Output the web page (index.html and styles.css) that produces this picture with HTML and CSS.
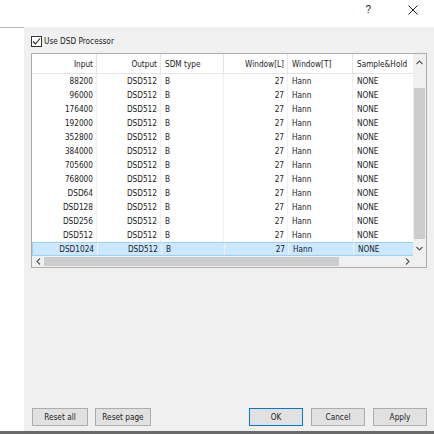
FILE: index.html
```html
<!DOCTYPE html>
<html>
<head>
<meta charset="utf-8">
<link rel="stylesheet" href="styles.css">
</head>
<body>
<div class="window">
  <div class="titlebar">
    <span class="tb-help">?</span>
    <span class="tb-close">
      <svg width="10" height="10" viewBox="0 0 10 10"><path d="M0.5 0.5 L9.5 9.5 M9.5 0.5 L0.5 9.5" stroke="#222" stroke-width="1" fill="none"/></svg>
    </span>
  </div>
  <div class="body">
    <div class="tree"></div>
    <div class="main">
      <label class="check-row">
        <span class="checkbox">
          <svg width="9" height="9" viewBox="0 0 9 9"><path d="M1 4.5 L3.5 7 L8 1.5" stroke="#222" stroke-width="1.1" fill="none"/></svg>
        </span>
        <span>Use DSD Processor</span>
      </label>
      <div class="listview">
        <div class="list">
          <div class="row header">
            <div class="c r">Input</div>
            <div class="c r">Output</div>
            <div class="c">SDM type</div>
            <div class="c r">Window[L]</div>
            <div class="c">Window[T]</div>
            <div class="c">Sample&amp;Hold</div>
          </div>
          <div class="row"><div class="c r">88200</div><div class="c r">DSD512</div><div class="c">B</div><div class="c r">27</div><div class="c">Hann</div><div class="c">NONE</div></div>
          <div class="row"><div class="c r">96000</div><div class="c r">DSD512</div><div class="c">B</div><div class="c r">27</div><div class="c">Hann</div><div class="c">NONE</div></div>
          <div class="row"><div class="c r">176400</div><div class="c r">DSD512</div><div class="c">B</div><div class="c r">27</div><div class="c">Hann</div><div class="c">NONE</div></div>
          <div class="row"><div class="c r">192000</div><div class="c r">DSD512</div><div class="c">B</div><div class="c r">27</div><div class="c">Hann</div><div class="c">NONE</div></div>
          <div class="row"><div class="c r">352800</div><div class="c r">DSD512</div><div class="c">B</div><div class="c r">27</div><div class="c">Hann</div><div class="c">NONE</div></div>
          <div class="row"><div class="c r">384000</div><div class="c r">DSD512</div><div class="c">B</div><div class="c r">27</div><div class="c">Hann</div><div class="c">NONE</div></div>
          <div class="row"><div class="c r">705600</div><div class="c r">DSD512</div><div class="c">B</div><div class="c r">27</div><div class="c">Hann</div><div class="c">NONE</div></div>
          <div class="row"><div class="c r">768000</div><div class="c r">DSD512</div><div class="c">B</div><div class="c r">27</div><div class="c">Hann</div><div class="c">NONE</div></div>
          <div class="row"><div class="c r">DSD64</div><div class="c r">DSD512</div><div class="c">B</div><div class="c r">27</div><div class="c">Hann</div><div class="c">NONE</div></div>
          <div class="row"><div class="c r">DSD128</div><div class="c r">DSD512</div><div class="c">B</div><div class="c r">27</div><div class="c">Hann</div><div class="c">NONE</div></div>
          <div class="row"><div class="c r">DSD256</div><div class="c r">DSD512</div><div class="c">B</div><div class="c r">27</div><div class="c">Hann</div><div class="c">NONE</div></div>
          <div class="row"><div class="c r">DSD512</div><div class="c r">DSD512</div><div class="c">B</div><div class="c r">27</div><div class="c">Hann</div><div class="c">NONE</div></div>
          <div class="row selected"><div class="c r">DSD1024</div><div class="c r">DSD512</div><div class="c">B</div><div class="c r">27</div><div class="c">Hann</div><div class="c">NONE</div></div>
        </div>
        <div class="vscroll">
          <div class="arrow">
            <svg width="7" height="5" viewBox="0 0 7 5"><path d="M0.5 4 L3.5 1 L6.5 4" stroke="#555" stroke-width="1.1" fill="none"/></svg>
          </div>
          <div class="vtrack"><div class="vthumb"></div></div>
          <div class="arrow">
            <svg width="7" height="5" viewBox="0 0 7 5"><path d="M0.5 1 L3.5 4 L6.5 1" stroke="#555" stroke-width="1.1" fill="none"/></svg>
          </div>
        </div>
        <div class="hscroll">
          <div class="harrow">
            <svg width="5" height="7" viewBox="0 0 5 7"><path d="M4 0.5 L1 3.5 L4 6.5" stroke="#555" stroke-width="1.1" fill="none"/></svg>
          </div>
          <div class="htrack"><div class="hthumb"></div></div>
          <div class="harrow">
            <svg width="5" height="7" viewBox="0 0 5 7"><path d="M1 0.5 L4 3.5 L1 6.5" stroke="#555" stroke-width="1.1" fill="none"/></svg>
          </div>
        </div>
        <div class="corner"></div>
      </div>
      <div class="spacer"></div>
      <div class="buttons">
        <div class="group left">
          <div class="btn">Reset all</div>
          <div class="btn">Reset page</div>
        </div>
        <div class="group right">
          <div class="btn default">OK</div>
          <div class="btn">Cancel</div>
          <div class="btn">Apply</div>
        </div>
      </div>
    </div>
  </div>
  <div class="bottomline"></div>
</div>
</body>
</html>
```
FILE: styles.css
```css
html, body {
  margin: 0;
  padding: 0;
  background: #ffffff;
}
body {
  font-family: "DejaVu Sans Condensed", "DejaVu Sans", sans-serif;
  font-size: 8.2px;
  color: #222222;
}
.window {
  width: 434px;
  height: 434px;
  display: flex;
  flex-direction: column;
  overflow: hidden;
}
.titlebar {
  height: 27px;
  display: flex;
  align-items: flex-start;
  justify-content: flex-end;
  box-sizing: border-box;
  padding-top: 5px;
}
.tb-help {
  font-family: "Liberation Sans", Arial, sans-serif;
  font-size: 10px;
  color: #222;
  margin-right: 37px;
  line-height: 10px;
}
.tb-close {
  margin-right: 16px;
  line-height: 10px;
}
.body {
  flex: 1;
  display: flex;
}
.tree {
  width: 24px;
  background: #ffffff;
  border-top: 1px solid #b9b9b9;
  box-sizing: border-box;
}
.main {
  flex: 1;
  background: #f0f0f0;
  display: flex;
  flex-direction: column;
  padding: 8px 7px 5px 7px;
}
.check-row {
  display: flex;
  align-items: center;
  height: 12px;
  gap: 2px;
}
.checkbox {
  width: 11px;
  height: 11px;
  box-sizing: border-box;
  border: 1px solid #333;
  background: #fff;
  display: flex;
  align-items: center;
  justify-content: center;
}
.listview {
  margin-top: 6px;
  width: 396px;
  height: 215px;
  box-sizing: border-box;
  border: 1px solid #adadad;
  background: #fff;
  display: grid;
  grid-template-columns: 381px 13px;
  grid-template-rows: 202px 11px;
}
.list {
  overflow: hidden;
}
.row {
  display: grid;
  grid-template-columns: 65px 64px 63px 64px 65px 60px;
  height: 14px;
  box-sizing: border-box;
  align-items: center;
}
.row .c {
  height: 100%;
  box-sizing: border-box;
  border-right: 1px solid #f0f0f0;
  padding: 0 3px 0 4px;
  display: flex;
  align-items: center;
  white-space: nowrap;
  overflow: hidden;
}
.row .c.r {
  justify-content: flex-end;
}
.row .c:last-child {
  border-right: none;
}
.row.header {
  height: 20px;
  border-bottom: 1px solid #e5e5e5;
}
.row.header .c {
  border-right: 1px solid #e5e5e5;
}
.row.header .c:last-child {
  border-right: none;
}
.row.selected {
  background: #cce8ff;
  border: 1px solid #99d1ff;
  border-right: none;
}
.vscroll {
  background: #f0f0f0;
  display: flex;
  flex-direction: column;
}
.arrow {
  height: 16px;
  display: flex;
  align-items: center;
  justify-content: center;
}
.vtrack {
  flex: 1;
  display: flex;
  flex-direction: column;
  padding: 18px 1px 1px 1px;
}
.vthumb {
  flex: 1;
  background: #cdcdcd;
}
.hscroll {
  background: #f0f0f0;
  display: flex;
}
.harrow {
  width: 12px;
  display: flex;
  align-items: center;
  justify-content: center;
}
.htrack {
  flex: 1;
  padding: 1px 0;
  display: flex;
}
.hthumb {
  width: 295px;
  background: #cdcdcd;
}
.corner {
  background: #f0f0f0;
}
.spacer {
  flex: 1;
}
.buttons {
  display: flex;
  justify-content: space-between;
  height: 18px;
}
.group {
  display: flex;
}
.group.left {
  gap: 7px;
  margin-left: 1px;
}
.group.left .btn {
  width: 56px;
}
.group.right {
  gap: 8px;
}
.group.right .btn {
  width: 54px;
}
.btn {
  height: 18px;
  box-sizing: border-box;
  border: 1px solid #adadad;
  background: #e1e1e1;
  display: flex;
  align-items: center;
  justify-content: center;
  color: #222;
}
.btn.default {
  border: 1px solid #0078d7;
}
.bottomline {
  height: 3px;
  background: #6a6a6a;
}
```
